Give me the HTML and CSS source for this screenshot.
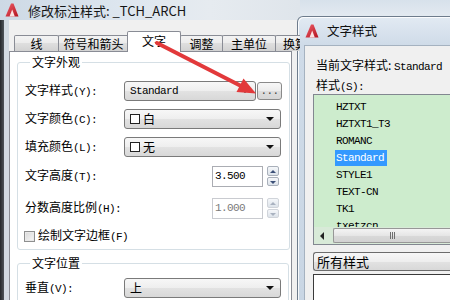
FILE: index.html
```html
<!DOCTYPE html>
<html lang="zh-CN">
<head>
<meta charset="utf-8">
<title>修改标注样式</title>
<link rel="stylesheet" href="styles.css">
</head>
<body>
<div class="dlg-left">
  <div class="tb-left">
    <svg class="acad" width="14" height="14" viewBox="0 0 14 14"><defs><linearGradient id="ag" x1="0" y1="0" x2="1" y2="1"><stop offset="0" stop-color="#f0606a"/><stop offset="1" stop-color="#b3121f"/></linearGradient></defs><polygon points="0.5,13.5 6,0.5 8.5,0.5 13.5,13.5" fill="url(#ag)"/><polygon points="4.5,13.5 7.2,6.5 9.8,13.5" fill="#fbe3e3"/></svg>
    <span class="ttl">修改标注样式: _TCH_ARCH</span>
  </div>
  <div class="lbody">
    <div class="edge"></div>
    <div class="frame"></div>
    <div class="client">
      <div class="tabs">
        <div class="tab w1">线</div>
        <div class="tab w2">符号和箭头</div>
        <div class="tab sel w3">文字</div>
        <div class="tab w4">调整</div>
        <div class="tab w5">主单位</div>
        <div class="tab w6">换算</div>
      </div>
      <div class="panel">
        <fieldset class="fs">
          <legend>文字外观</legend>
          <div class="row r1">
            <span class="lbl">文字样式<span class="k">(Y):</span></span>
            <div class="combo c-short"><span class="mono">Standard</span><i class="dd"></i></div>
            <div class="btn"><span class="mono">...</span></div>
          </div>
          <div class="row">
            <span class="lbl">文字颜色<span class="k">(C):</span></span>
            <div class="combo c-full"><span class="sw"></span>白<i class="dd"></i></div>
          </div>
          <div class="row">
            <span class="lbl">填充颜色<span class="k">(L):</span></span>
            <div class="combo c-full"><span class="sw"></span>无<i class="dd"></i></div>
          </div>
          <div class="row tall r4">
            <span class="lbl">文字高度<span class="k">(T):</span></span>
            <div class="num"><span class="mono">3.500</span></div>
            <div class="spin"><span class="up"><i></i></span><span class="down"><i></i></span></div>
          </div>
          <div class="row tall">
            <span class="lbl">分数高度比例<span class="k">(H):</span></span>
            <div class="num dis"><span class="mono">1.000</span></div>
            <div class="spin dis"><span class="up"><i></i></span><span class="down"><i></i></span></div>
          </div>
          <div class="row chk">
            <span class="cb"></span><span>绘制文字边框<span class="k">(F)</span></span>
          </div>
        </fieldset>
        <fieldset class="fs fs2">
          <legend>文字位置</legend>
          <div class="row tall r-last">
            <span class="lbl">垂直<span class="k">(V):</span></span>
            <div class="combo c-full">上<i class="dd"></i></div>
          </div>
        </fieldset>
      </div>
    </div>
  </div>
</div>

<div class="dlg-right">
  <div class="rtb">
    <svg class="acad" width="14" height="14" viewBox="0 0 14 14"><defs><linearGradient id="ag2" x1="0" y1="0" x2="1" y2="1"><stop offset="0" stop-color="#f0606a"/><stop offset="1" stop-color="#b3121f"/></linearGradient></defs><polygon points="0.5,13.5 6,0.5 8.5,0.5 13.5,13.5" fill="url(#ag2)"/><polygon points="4.5,13.5 7.2,6.5 9.8,13.5" fill="#fbe3e3"/></svg>
    <span class="rttl">文字样式</span>
  </div>
  <div class="rbody">
    <div class="cur">当前文字样式: <span class="mono">Standard</span></div>
    <div class="lab">样式<span class="k">(S):</span></div>
    <div class="list">
      <div class="items">
        <div class="it"><span class="mono">HZTXT</span></div>
        <div class="it"><span class="mono">HZTXT1_T3</span></div>
        <div class="it"><span class="mono">ROMANC</span></div>
        <div class="it on"><span class="mono">Standard</span></div>
        <div class="it"><span class="mono">STYLE1</span></div>
        <div class="it"><span class="mono">TEXT-CN</span></div>
        <div class="it"><span class="mono">TK1</span></div>
        <div class="it"><span class="mono">txetzcn</span></div>
      </div>
      <div class="hscroll">
        <span class="sbtn"><i></i></span>
        <span class="thumb"><b></b><b></b><b></b></span>
      </div>
    </div>
    <div class="combo all">所有样式</div>
    <div class="preview"></div>
  </div>
</div>

<svg class="arrow" width="450" height="300" viewBox="0 0 450 300">
  <line x1="157" y1="43" x2="242" y2="86.5" stroke="#e2393b" stroke-width="4" stroke-linecap="round"/>
  <polygon points="256,93.5 236.5,92 243.5,78.5" fill="#e2393b"/>
</svg>
</body>
</html>
```

FILE: styles.css
```css
* { box-sizing: border-box; margin: 0; padding: 0; }
html, body { width: 450px; height: 300px; overflow: hidden; }
body {
  position: relative;
  background: linear-gradient(180deg, #d7e1eb 0, #e6ecf2 20px, #e9edf1 100%);
  font-family: "Noto Sans CJK SC", "Noto Sans", sans-serif;
  font-size: 12px;
  color: #000;
}
.mono { font-family: "Liberation Mono", "DejaVu Sans Mono", monospace; font-size: 11px; letter-spacing: -0.6px; }
.k { font-family: "Liberation Mono", monospace; font-size: 11px; letter-spacing: -0.6px; }

/* left dialog (window on desktop) */
.dlg-left { position: absolute; left: 0; top: 0; width: 300px; height: 300px; display: flex; flex-direction: column; overflow: hidden; }
.tb-left {
  flex: none; height: 20px; display: flex; align-items: center; gap: 9px; padding-left: 5px;
  background: linear-gradient(90deg, #cdd9e5 0, #dde6ef 40%, #e6ebf0 70%, #dfe5eb 100%);
}
.ttl { font-size: 13px; color: #151515; line-height: 15px; white-space: nowrap; }
.lbody { flex: 1; min-height: 0; display: flex; overflow: hidden; }
.edge { flex: none; width: 4px; background: linear-gradient(90deg, #25282c, #4f555c); }
.frame { flex: none; width: 5px; background: #d2dae3; }
.client { flex: 1; min-width: 0; overflow: hidden; background: #f0f0f0; padding-top: 11px; }

.tabs { display: flex; align-items: flex-end; height: 20px; padding-left: 5px; position: relative; z-index: 1; }
.tab {
  flex: none; height: 16px; border: 1px solid #898c95; border-bottom: none; border-radius: 2px 2px 0 0;
  background: linear-gradient(#f3f3f3, #ebebeb 50%, #dedede 50%, #d2d2d2);
  margin-right: -1px; display: flex; align-items: center; justify-content: center;
  font-size: 12px; line-height: 1; white-space: nowrap;
}
.tab.sel { height: 21px; background: #fff; margin-left: -1px; margin-bottom: -1px; position: relative; z-index: 2; padding-bottom: 2px; }
.w1 { width: 45px; }
.w2 { width: 71px; }
.w3 { width: 54px; }
.w4 { width: 43px; }
.w5 { width: 54px; }
.w6 { width: 40px; }

.panel { width: 283px; height: 249px; overflow: hidden; border: 1px solid #898c95; border-bottom: none; background: #fff; padding: 3px 0 0 7px; }

.fs { border: 1px solid #d5dfe5; border-radius: 3px; width: 269px; padding: 0 7px 5px 7px; }
.fs legend { margin-left: 5px; padding: 0 2px; line-height: 14px; font-size: 12px; }
.fs2 { margin-top: 6px; padding-bottom: 20px; }

.row { display: flex; align-items: center; height: 20px; margin-top: 8px; line-height: 14px; }
.row.r1 { margin-top: 12px; }
.row.tall { height: 22px; margin-top: 10px; }
.row.r4 { margin-top: 8px; }
.row.chk { height: 16px; margin-top: 9px; gap: 3px; }
.row.r-last { margin-top: 7px; }
.lbl { width: 99px; flex: none; white-space: nowrap; }

.combo {
  flex: none; height: 20px; border: 1px solid #7a7a7a; border-radius: 3px;
  background: linear-gradient(#f7f7f7, #eeeeee 50%, #e2e2e2 51%, #d8d8d8);
  display: flex; align-items: center; padding-left: 5px; position: relative; line-height: 14px;
}
.c-short { width: 132px; }
.c-full { width: 157px; }
.dd { position: absolute; right: 6px; top: 7px; width: 0; height: 0; border-left: 4px solid transparent; border-right: 4px solid transparent; border-top: 4px solid #111; }
.btn {
  flex: none; width: 25px; height: 18px; margin-left: 1px; border: 1px solid #8a8a8a; border-radius: 3px;
  background: linear-gradient(#f7f7f7, #ececec 50%, #dedede 51%, #d6d6d6);
  display: flex; align-items: center; justify-content: center; color: #444;
}
.sw { width: 10px; height: 10px; border: 1px solid #222; background: #fff; margin-right: 3px; }

.num { flex: none; width: 51px; height: 21px; margin-left: 88px; border: 1px solid #abadb3; background: #fff; display: flex; align-items: center; padding-left: 2px; }
.num.dis { border-color: #c9cbd0; color: #7a7a7a; }
.spin { flex: none; width: 12px; height: 20px; margin-left: 4px; display: flex; flex-direction: column; gap: 1px; }
.spin span { flex: 1; border: 1px solid #a9b0ba; border-radius: 2px; background: linear-gradient(#f5f7fa, #dde3ea); position: relative; }
.spin i { position: absolute; left: 2px; top: 3px; width: 0; height: 0; border-left: 3px solid transparent; border-right: 3px solid transparent; }
.spin .up i { border-bottom: 3px solid #3c5078; }
.spin .down i { border-top: 3px solid #3c5078; }
.spin.dis span { border-color: #d0d4da; }
.spin.dis .up i { border-bottom-color: #a9b2c0; }
.spin.dis .down i { border-top-color: #a9b2c0; }
.cb { flex: none; width: 11px; height: 11px; margin-left: -1px; border: 1px solid #8e8f8f; background: linear-gradient(135deg, #d8d8d8, #f6f6f6); box-shadow: inset 0 0 0 1px #e9e9e9; }

/* right dialog */
.dlg-right {
  position: absolute; left: 297px; top: 16px; width: 170px; height: 284px; overflow: hidden;
  border: 1px solid #6e7c8c; border-bottom: none; border-radius: 6px 6px 0 0;
  background: linear-gradient(#e2eaf3, #cfdbe8 28px, #c9d6e4);
  box-shadow: inset 1px 1px 0 rgba(255,255,255,0.85);
  display: flex; flex-direction: column;
}
.rtb { height: 28px; flex: none; display: flex; align-items: center; gap: 8px; padding-left: 7px; }
.rttl { font-size: 12.5px; line-height: 14px; color: #111; }
.rbody { flex: 1; min-height: 0; margin-left: 6px; background: #f0f0f0; border-top: 1px solid #a5b2c0; border-left: 1px solid #a5b2c0; padding-left: 8px; }
.cur { margin: 12px 0 0 3px; line-height: 14px; white-space: nowrap; }
.lab { margin: 4px 0 0 3px; line-height: 14px; }
.list { height: 151px; border: 1px solid #828790; border-right: none; background: #cdeccd; display: flex; flex-direction: column; }
.items { flex: 1; min-height: 0; overflow: hidden; padding: 3px 0 0 21px; }
.it { height: 17px; display: flex; align-items: center; }
.it span { padding: 1px 3px 1px 1px; line-height: 14px; }
.it.on span { background: #3399ff; color: #fff; }
.hscroll { height: 17px; flex: none; display: flex; background: #d8ead8; }
.sbtn { flex: none; width: 17px; position: relative; }
.sbtn i { position: absolute; left: 6px; top: 5px; width: 0; height: 0; border-top: 4px solid transparent; border-bottom: 4px solid transparent; border-right: 4px solid #222; }
.thumb {
  flex: 1; margin: 1px 0 1px 2px; border: 1px solid #979797; border-right: none; border-radius: 2px 0 0 2px;
  background: linear-gradient(#f4f4f4, #e6e6e6 50%, #d9d9d9 51%, #d2d2d2);
  display: flex; align-items: center; gap: 1px; padding-left: 56px;
}
.thumb b { width: 1px; height: 7px; background: #6f6f6f; }
.combo.all { margin-top: 7px; height: 19px; padding-left: 3px; font-size: 13px; border-color: #6c6c6c; border-right: none; border-radius: 3px 0 0 3px; }
.preview { margin-top: 3px; height: 30px; border: 1px solid #3a3a3a; border-right: none; border-bottom: none; background: #fff; }

.arrow { position: absolute; left: 0; top: 0; z-index: 10; pointer-events: none; }
```
